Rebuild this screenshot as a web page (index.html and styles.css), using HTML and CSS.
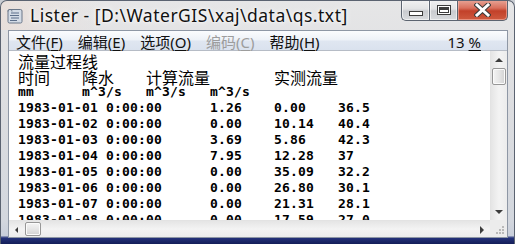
FILE: index.html
```html
<!DOCTYPE html>
<html lang="zh-CN">
<head>
  <meta charset="UTF-8">
  <title>Lister</title>
  <link rel="stylesheet" href="styles.css">
</head>
<body>
  <div class="window">
    <div class="titlebar">
      <svg class="app-icon" width="18" height="18" viewBox="0 0 18 18">
        <path d="M3 2.5h11.5a1.5 1.5 0 0 1 1.5 1.5v10.5a1.5 1.5 0 0 1-1.5 1.5H3.5a1.5 1.5 0 0 1-1.5-1.5V4a1.5 1.5 0 0 1 1-1.5z" fill="#d3dbe6" stroke="#6a7789"/>
        <path d="M2 4.5c0-1.2 1-2 2-2s2 .8 2 2" fill="none" stroke="#6a7789"/>
        <path d="M5 6h8M4 8.5h9M5 11h8M4 13.5h7" stroke="#5d6f8a" stroke-width="1.2"/>
      </svg>
      <span class="title">Lister - [D:\WaterGIS\xaj\data\qs.txt]</span>
      <div class="controls">
        <div class="ctl-btn ctl-min"><span class="min-glyph"></span></div>
        <div class="ctl-btn ctl-max"><span class="max-glyph"></span></div>
        <div class="ctl-btn ctl-close">
          <svg width="17" height="14" viewBox="0 0 17 14">
            <path d="M3 2l11 10M14 2L3 12" stroke="#3b3b3b" stroke-width="5" stroke-linecap="square"/>
            <path d="M3 2l11 10M14 2L3 12" stroke="#ffffff" stroke-width="3" stroke-linecap="square"/>
          </svg>
        </div>
      </div>
    </div>

    <div class="client">
      <div class="menubar">
        <span class="menu-item">文件(<u>F</u>)</span>
        <span class="menu-item">编辑(<u>E</u>)</span>
        <span class="menu-item">选项(<u>O</u>)</span>
        <span class="menu-item disabled">编码(<u>C</u>)</span>
        <span class="menu-item">帮助(<u>H</u>)</span>
        <span class="zoom-level">13 <u>%</u></span>
      </div>

      <div class="viewer">
        <div class="text-view">
          <div class="line cjk">流量过程线</div>
          <div class="line cjk">时间	降水	计算流量	实测流量</div>
          <div class="line">mm	m^3/s	m^3/s	m^3/s</div>
          <div class="line">1983-01-01 0:00:00	1.26	0.00	36.5</div>
          <div class="line">1983-01-02 0:00:00	0.00	10.14	40.4</div>
          <div class="line">1983-01-03 0:00:00	3.69	5.86	42.3</div>
          <div class="line">1983-01-04 0:00:00	7.95	12.28	37</div>
          <div class="line">1983-01-05 0:00:00	0.00	35.09	32.2</div>
          <div class="line">1983-01-06 0:00:00	0.00	26.80	30.1</div>
          <div class="line">1983-01-07 0:00:00	0.00	21.31	28.1</div>
          <div class="line">1983-01-08 0:00:00	0.00	17.59	27.0</div>
        </div>

        <div class="vscroll">
          <div class="arrow-btn"><span class="tri tri-up"></span></div>
          <div class="thumb thumb-v"></div>
          <div class="track"></div>
          <div class="arrow-btn"><span class="tri tri-down"></span></div>
        </div>

        <div class="hscroll">
          <div class="arrow-btn"><span class="tri tri-left"></span></div>
          <div class="thumb thumb-h"></div>
          <div class="track"></div>
          <div class="arrow-btn"><span class="tri tri-right"></span></div>
        </div>

        <div class="size-grip">
          <svg width="17" height="17" viewBox="0 0 17 17">
            <g fill="#b9b9b9">
              <rect x="12" y="6" width="2" height="2"/>
              <rect x="9" y="9" width="2" height="2"/>
              <rect x="12" y="9" width="2" height="2"/>
              <rect x="6" y="12" width="2" height="2"/>
              <rect x="9" y="12" width="2" height="2"/>
              <rect x="12" y="12" width="2" height="2"/>
            </g>
          </svg>
        </div>
      </div>
    </div>
  </div>
</body>
</html>
```

FILE: styles.css
```css
* {
  margin: 0;
  padding: 0;
  box-sizing: border-box;
}

body {
  width: 515px;
  height: 244px;
  overflow: hidden;
  background: #c9cdd3;
}

.window {
  width: 515px;
  height: 244px;
  display: flex;
  flex-direction: column;
  border: 1px solid #5b6371;
  border-bottom: none;
  border-radius: 7px 7px 0 0;
  background: linear-gradient(to bottom, #e6e6e7 0%, #dcdde0 45%, #d3d7de 90%, #c9cfdb 96.5%, #24327a 97.5%, #141d58 100%);
  overflow: hidden;
}

/* Title bar */
.titlebar {
  height: 29px;
  flex-shrink: 0;
  display: flex;
  align-items: flex-start;
  padding-left: 5px;
  background: linear-gradient(to right, rgba(240, 214, 200, 0.35), rgba(255, 255, 255, 0) 20%);
}

.app-icon {
  margin-top: 6px;
  flex-shrink: 0;
}

.title {
  margin-left: 6px;
  margin-top: 3px;
  font-family: "Noto Sans", "Liberation Sans", sans-serif;
  font-size: 17.5px;
  letter-spacing: 0.5px;
  line-height: 22px;
  color: #111;
  white-space: nowrap;
  text-shadow: 0 0 6px #fff, 0 0 3px #fff;
}

.controls {
  margin-left: auto;
  margin-right: 6px;
  display: flex;
  height: 21px;
  margin-top: -1px;
}

.ctl-btn {
  height: 21px;
  display: flex;
  align-items: center;
  justify-content: center;
  border: 1px solid #5c6470;
  border-top: none;
  background: linear-gradient(to bottom, #f2f2f2 0%, #e2e3e5 45%, #c9cbcf 55%, #d9dbde 100%);
  box-shadow: inset 0 0 0 1px rgba(255, 255, 255, 0.6);
}

.ctl-min {
  width: 28px;
  border-radius: 0 0 0 5px;
  border-right: none;
}

.ctl-max {
  width: 29px;
}

.ctl-close {
  width: 50px;
  border-left: none;
  border-radius: 0 0 5px 0;
  background: linear-gradient(to bottom, #e8a698 0%, #d9705d 40%, #c2412a 55%, #cf5a3f 100%);
  box-shadow: inset 0 0 0 1px rgba(255, 200, 190, 0.5);
}

.min-glyph {
  width: 14px;
  height: 5px;
  margin-top: 7px;
  background: #fff;
  border: 1px solid #3c3c3c;
}

.max-glyph {
  width: 14px;
  height: 10px;
  border: 1px solid #3c3c3c;
  box-shadow: inset 0 0 0 1px #fff, inset 0 0 0 2px #3c3c3c, inset 0 2px 0 2px #3c3c3c;
  background: #fff;
}

/* Client area */
.client {
  flex: 1;
  min-height: 0;
  display: flex;
  flex-direction: column;
  margin: 0 6px 6px 7px;
  border: 1px solid #8e97a5;
  background: #fff;
}

.menubar {
  height: 20px;
  flex-shrink: 0;
  display: flex;
  align-items: flex-start;
  font-family: "Noto Sans", "Noto Sans CJK SC", sans-serif;
  font-size: 15px;
  color: #111;
  background: linear-gradient(to bottom, #fbfcfe 0%, #eef2f8 45%, #dfe6f1 55%, #dae2ee 100%);
  border-bottom: 1px solid #b6bcc6;
}

.menu-item {
  padding: 3px 8px 0 7px;
  line-height: 17px;
  white-space: nowrap;
}

.menu-item.disabled {
  color: #9d9d9d;
}

.zoom-level {
  margin-left: auto;
  margin-right: 26px;
  padding-top: 3px;
  line-height: 17px;
}

u {
  text-underline-offset: 2px;
}

.viewer {
  flex: 1;
  min-height: 0;
  display: grid;
  grid-template-columns: minmax(0, 1fr) 17px;
  grid-template-rows: minmax(0, 1fr) 17px;
}

.text-view {
  min-height: 0;
  padding: 1px 0 0 9px;
  overflow: hidden;
  font-family: "DejaVu Sans Mono", monospace;
  font-weight: bold;
  font-size: 13px;
  letter-spacing: 0.17px;
  color: #000;
}

.line {
  height: 16px;
  line-height: 16px;
  white-space: pre;
  tab-size: 64px;
}

.line.cjk {
  font-family: "Noto Sans CJK SC", sans-serif;
  font-weight: normal;
  font-size: 16px;
  line-height: 19px;
  letter-spacing: 0;
}

/* Scrollbars */
.vscroll,
.hscroll {
  display: flex;
  background: #ececec;
}

.vscroll {
  flex-direction: column;
  border-left: 1px solid #e3e3e3;
  background: linear-gradient(to right, #e5e5e5, #f3f3f3 50%, #ececec);
}

.hscroll {
  background: linear-gradient(to bottom, #e5e5e5, #f3f3f3 50%, #ececec);
  border-top: 1px solid #e3e3e3;
}

.arrow-btn {
  width: 16px;
  height: 17px;
  flex-shrink: 0;
  display: flex;
  align-items: center;
  justify-content: center;
}

.track {
  flex: 1;
}

.thumb {
  border: 1px solid #979797;
  border-radius: 2px;
  background: linear-gradient(to right, #f4f4f4, #e6e6e6 50%, #d2d2d2);
  box-shadow: inset 0 0 0 1px #fbfbfb;
}

.thumb-v {
  height: 17px;
  margin: 0 1px;
}

.thumb-h {
  width: 16px;
  margin: 1px 0;
  background: linear-gradient(to bottom, #f4f4f4, #e6e6e6 50%, #d2d2d2);
}

.tri {
  width: 0;
  height: 0;
  border: 4px solid transparent;
}

.tri-up {
  border-bottom-color: #3c3c3c;
  margin-top: -4px;
}

.tri-down {
  border-top-color: #3c3c3c;
  margin-top: 4px;
}

.tri-left {
  border-right-color: #3c3c3c;
  margin-left: -4px;
  border-width: 3px 3px;
}

.tri-right {
  border-left-color: #3c3c3c;
  margin-left: 4px;
  border-width: 4px 4px;
}

.size-grip {
  background: #ececec;
}
```
